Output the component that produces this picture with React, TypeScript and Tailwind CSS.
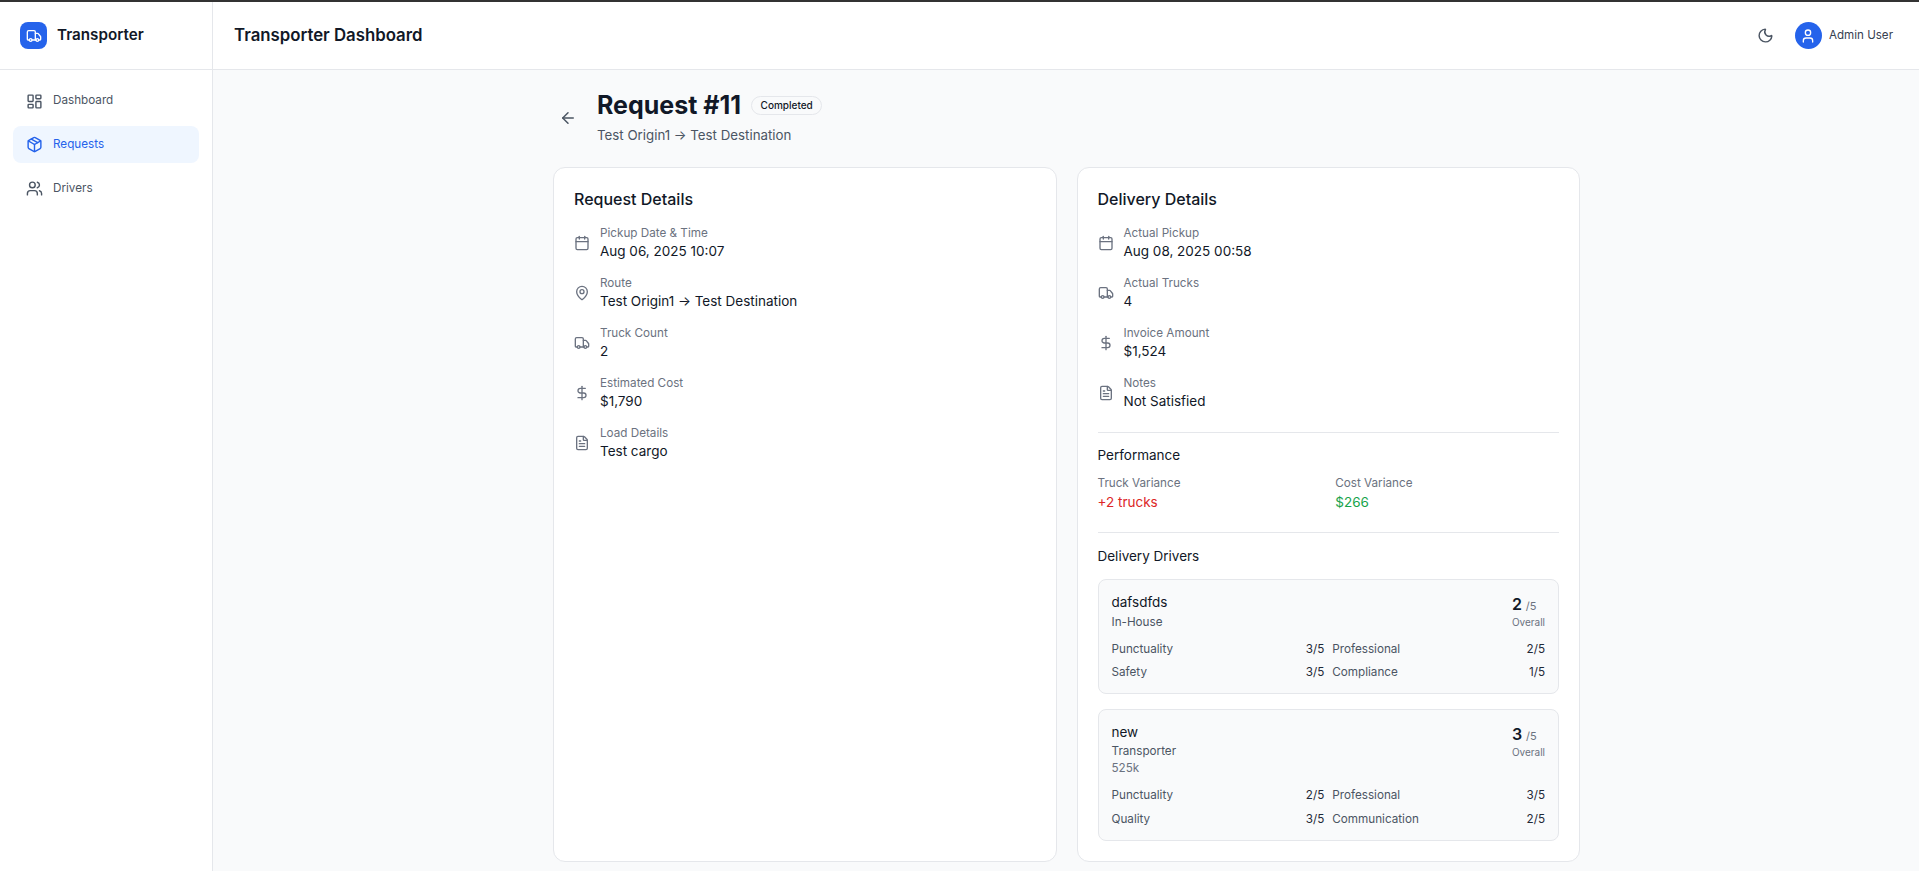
import React from "react";
import { Truck, LayoutDashboard, Package, Users, Moon, User, ArrowLeft, Calendar, MapPin, DollarSign, FileText } from "lucide-react";

const Row = ({ icon: I, label, value }: any) => (
  <div className="flex items-center gap-[10px]">
    <I className="w-4 h-4 text-[#6b7280] shrink-0" />
    <div>
      <div className="text-[11.7px] leading-4 text-[#6b7280]">{label}</div>
      <div className="text-[13.5px] leading-5 font-[425] text-[#111827]">{value}</div>
    </div>
  </div>
);

const Nav = ({ icon: I, label, active }: any) => (
  <div className={`flex items-center gap-[10px] h-[37px] px-[13px] rounded-lg text-[11.7px] font-[425] ${active ? "bg-[#eff6ff] text-[#2563eb]" : "text-[#4b5563]"}`}>
    <I className="w-[17px] h-[17px]" />
    {label}
  </div>
);

const Score = ({ a, b }: any) => (
  <div className="flex justify-between text-[11.7px] leading-4">
    <span className="text-[#4b5563]">{a}</span>
    <span className="text-[#1f2937]">{b}</span>
  </div>
);

const Driver = ({ name, type, extra, score, rows }: any) => (
  <div className="border border-[#e5e7eb] rounded-lg bg-[#f9fafb] px-[13px] pt-3 pb-[13px]">
    <div className="flex justify-between">
      <div>
        <div className="text-[13.5px] leading-5 font-[425] text-[#111827]">{name}</div>
        <div className="text-[11.7px] leading-4 mt-[1.5px] text-[#4b5563]">{type}</div>
        {extra && <div className="text-[11.7px] leading-4 mt-[1px] text-[#6b7280]">{extra}</div>}
      </div>
      <div className="text-right">
        <div className="h-6 flex items-baseline gap-1">
          <span className="text-base leading-6 font-semibold text-[#111827]">{score}</span>
          <span className="text-[11px] leading-none text-[#6b7280]">/5</span>
        </div>
        <div className="text-[10px] leading-[13px] text-[#6b7280]">Overall</div>
      </div>
    </div>
    <div className="grid grid-cols-2 gap-x-2 gap-y-[7.5px] mt-[11px]">
      {rows.map((r: any) => <Score key={r[0]} a={r[0]} b={r[1]} />)}
    </div>
  </div>
);

export default function App() {
  return (
    <div className="h-[871px] overflow-hidden flex flex-col font-['Inter',sans-serif] bg-[#f9fafb]">
      <div className="h-0.5 bg-[#333333] shrink-0" />
      <div className="flex flex-1 min-h-0">
        <aside className="w-[213px] shrink-0 bg-white border-r border-[#e5e7eb] flex flex-col">
          <div className="h-[68px] border-b border-[#e5e7eb] flex items-center gap-[10px] px-5 shrink-0">
            <div className="w-[27px] h-[27px] rounded-lg bg-[#2563eb] flex items-center justify-center">
              <Truck className="w-4 h-4 text-white" />
            </div>
            <span className="text-[15.2px] font-semibold text-[#111827]">Transporter</span>
          </div>
          <nav className="px-[13px] pt-[12.5px] flex flex-col gap-[6.7px]">
            <Nav icon={LayoutDashboard} label="Dashboard" />
            <Nav icon={Package} label="Requests" active />
            <Nav icon={Users} label="Drivers" />
          </nav>
        </aside>
        <div className="flex-1 min-w-0 flex flex-col">
          <header className="h-[68px] shrink-0 bg-white border-b border-[#e5e7eb] flex items-center justify-between pl-[21px] pr-[26px]">
            <h1 className="text-[16.8px] font-semibold text-[#111827]">Transporter Dashboard</h1>
            <div className="flex items-center gap-[20.5px]">
              <Moon className="w-[17px] h-[17px] text-[#4b5563]" />
              <div className="flex items-center gap-[7px]">
                <div className="w-[27px] h-[27px] rounded-full bg-[#2563eb] flex items-center justify-center">
                  <User className="w-4 h-4 text-white" />
                </div>
                <span className="text-[11.6px] font-[425] text-[#374151]">Admin User</span>
              </div>
            </div>
          </header>
          <main className="flex-1 min-h-0 overflow-hidden pt-[19px] pl-[1px]">
            <div className="w-[1027px] mx-auto">
              <div className="flex items-center gap-5 mb-[21.4px]">
                <ArrowLeft className="w-[18px] h-[18px] text-[#4b5563] ml-[6px] mt-[2px]" />
                <div>
                  <div className="flex items-center gap-2.5">
                    <h2 className="text-[25px] leading-8 font-bold text-[#111827]">Request #11</h2>
                    <span className="border border-[#e5e7eb] rounded-full px-[8.5px] h-[19px] leading-[17px] text-[10px] font-medium text-[#111827]">Completed</span>
                  </div>
                  <p className="text-[13.3px] leading-5 text-[#4b5563] mt-[4.3px]">Test Origin1 → Test Destination</p>
                </div>
              </div>
              <div className="grid grid-cols-2 gap-5">
                <div className="bg-white border border-[#e5e7eb] rounded-xl px-5 pt-[19px] pb-5">
                  <h3 className="text-base leading-6 font-[550] text-[#111827] mb-[14px]">Request Details</h3>
                  <div className="flex flex-col gap-[14px]">
                    <Row icon={Calendar} label="Pickup Date & Time" value="Aug 06, 2025 10:07" />
                    <Row icon={MapPin} label="Route" value="Test Origin1 → Test Destination" />
                    <Row icon={Truck} label="Truck Count" value="2" />
                    <Row icon={DollarSign} label="Estimated Cost" value="$1,790" />
                    <Row icon={FileText} label="Load Details" value="Test cargo" />
                  </div>
                </div>
                <div className="bg-white border border-[#e5e7eb] rounded-xl px-5 pt-[19px] pb-5">
                  <h3 className="text-base leading-6 font-[550] text-[#111827] mb-[14px]">Delivery Details</h3>
                  <div className="flex flex-col gap-[14px]">
                    <Row icon={Calendar} label="Actual Pickup" value="Aug 08, 2025 00:58" />
                    <Row icon={Truck} label="Actual Trucks" value="4" />
                    <Row icon={DollarSign} label="Invoice Amount" value="$1,524" />
                    <Row icon={FileText} label="Notes" value="Not Satisfied" />
                  </div>
                  <div className="border-t border-[#e5e7eb] mt-[21px] pt-3">
                    <h4 className="text-[13.5px] leading-5 font-[425] text-[#111827] mb-2.5">Performance</h4>
                    <div className="grid grid-cols-2 gap-[14px]">
                      <div>
                        <div className="text-[11.7px] leading-4 text-[#6b7280]">Truck Variance</div>
                        <div className="text-[13.5px] leading-5 mt-[1px] text-[#dc2626]">+2 trucks</div>
                      </div>
                      <div>
                        <div className="text-[11.7px] leading-4 text-[#6b7280]">Cost Variance</div>
                        <div className="text-[13.5px] leading-5 mt-[1px] text-[#16a34a]">$266</div>
                      </div>
                    </div>
                  </div>
                  <div className="border-t border-[#e5e7eb] mt-5 pt-[13.5px]">
                    <h4 className="text-[13.5px] leading-5 font-[425] text-[#111827] mb-[13px]">Delivery Drivers</h4>
                    <div className="flex flex-col gap-[14.5px]">
                      <Driver name="dafsdfds" type="In-House" score="2" rows={[["Punctuality","3/5"],["Professional","2/5"],["Safety","3/5"],["Compliance","1/5"]]} />
                      <Driver name="new" type="Transporter" extra="525k" score="3" rows={[["Punctuality","2/5"],["Professional","3/5"],["Quality","3/5"],["Communication","2/5"]]} />
                    </div>
                  </div>
                </div>
              </div>
            </div>
          </main>
        </div>
      </div>
    </div>
  );
}
